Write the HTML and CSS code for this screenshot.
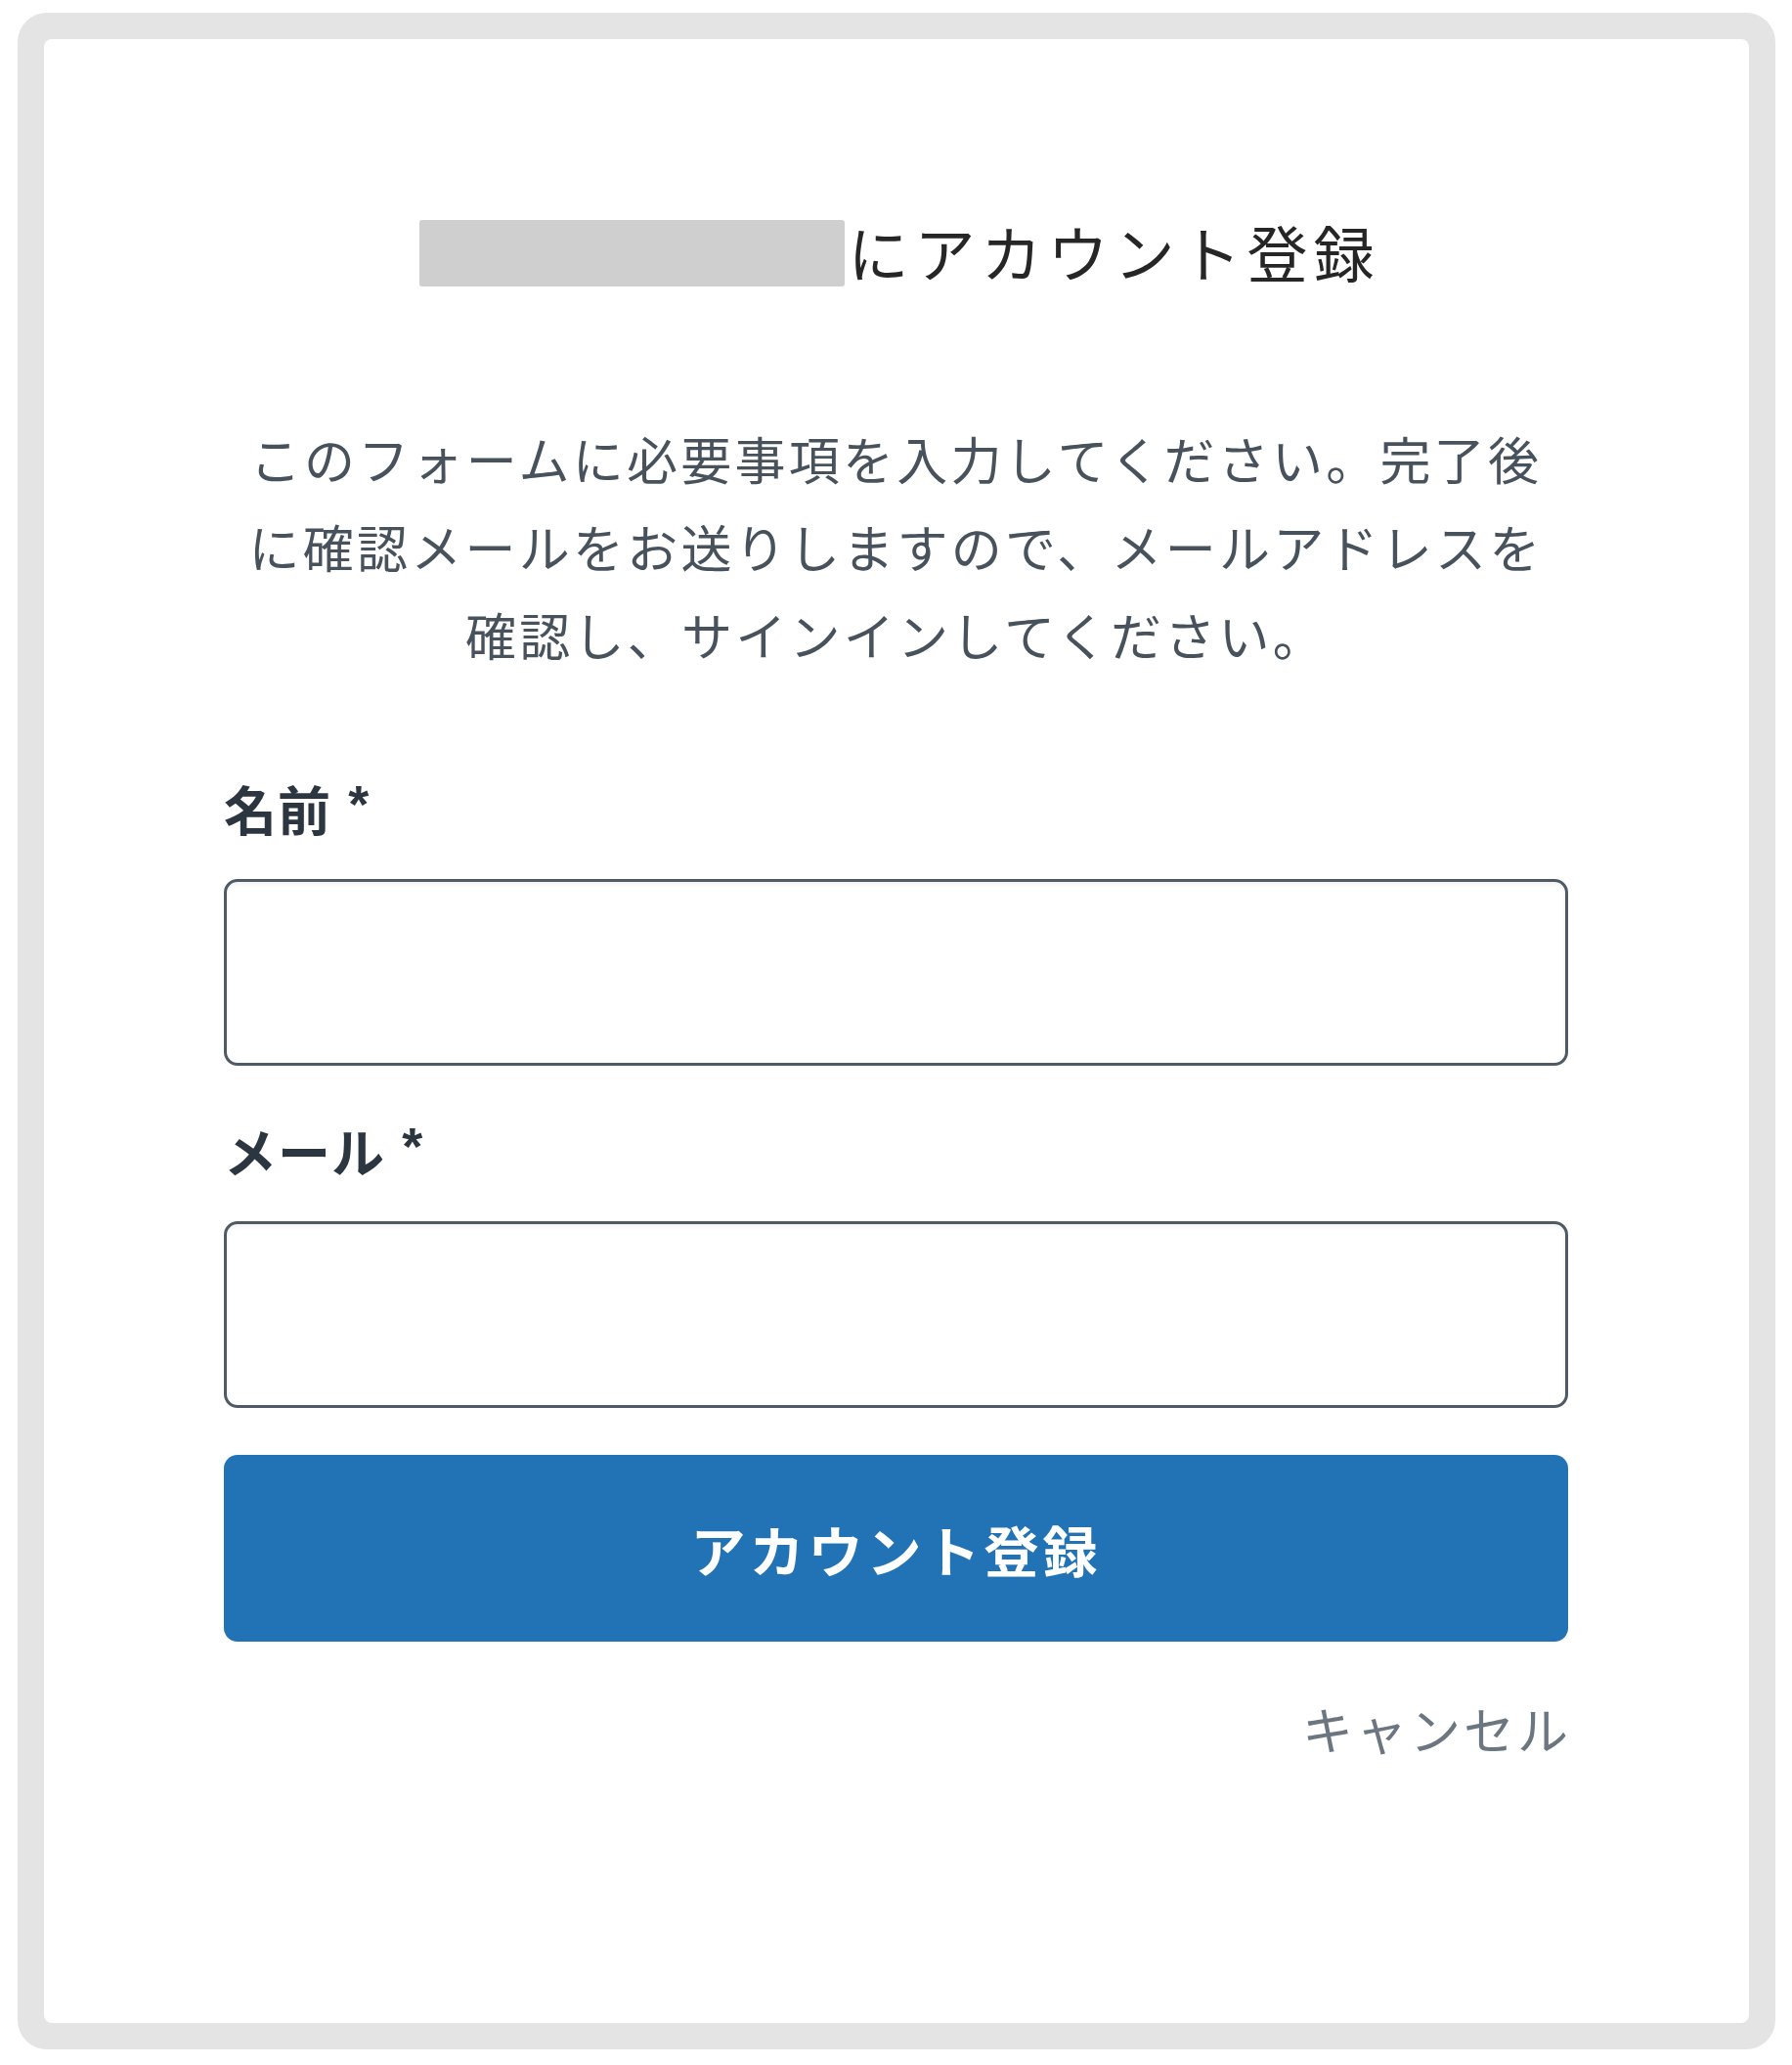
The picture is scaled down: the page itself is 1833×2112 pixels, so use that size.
FILE: index.html
```html
<!DOCTYPE html>
<html lang="ja">
<head>
<meta charset="utf-8">
<title>アカウント登録</title>
<link rel="stylesheet" href="styles.css">
</head>
<body>
  <div class="frame">
    <main class="card">
      <h1 class="title">
        <span class="redacted" aria-hidden="true"></span>
        <span class="title-text">にアカウント登録</span>
      </h1>
      <p class="lead">このフォームに必要事項を入力してください。完了後に確認メールをお送りしますので、メールアドレスを確認し、サインインしてください。</p>
      <form class="form">
        <label class="label" for="name">名前 <span class="req">*</span></label>
        <input class="input" id="name" type="text">
        <label class="label label-mail" for="mail">メール <span class="req">*</span></label>
        <input class="input" id="mail" type="email">
        <button class="submit" type="button">アカウント登録</button>
        <div class="cancel-row"><a class="cancel" href="#">キャンセル</a></div>
      </form>
    </main>
  </div>
</body>
</html>
```

FILE: styles.css
```css
html, body {
  margin: 0;
  padding: 0;
  background: #ffffff;
}

body {
  font-family: "Noto Sans CJK JP", "Noto Sans", sans-serif;
  padding: 13px 17px 16px 18px;
}

.frame {
  background: #e4e4e4;
  border-radius: 30px;
  padding: 27px;
  height: 2083px;
  box-sizing: border-box;
}

.card {
  background: #ffffff;
  border-radius: 8px;
  height: 100%;
  box-sizing: border-box;
  padding: 185px 185px 0 184px;
  display: flex;
  flex-direction: column;
}

.title {
  margin: 0;
  padding-left: 8px;
  height: 68px;
  display: flex;
  justify-content: center;
  align-items: center;
  font-weight: 400;
}

.redacted {
  display: block;
  width: 435px;
  height: 68px;
  background: #d0cfd0;
  border-radius: 3px;
  margin-right: 3px;
}

.title-text {
  font-size: 62px;
  line-height: 68px;
  letter-spacing: 6px;
  color: #262626;
  position: relative;
  top: -2px;
}

.lead {
  margin: 131px auto 0;
  width: 1345px;
  text-align: center;
  font-size: 52px;
  line-height: 90px;
  letter-spacing: 3.25px;
  color: #48525c;
}

.form {
  display: flex;
  flex-direction: column;
  margin-top: 103px;
}

.label {
  font-size: 54px;
  line-height: 60px;
  font-weight: 700;
  letter-spacing: 1px;
  color: #2c3640;
  margin-bottom: 42px;
}

.label-mail {
  margin-top: 57px;
}

.req {
  font-family: "Liberation Sans", Arial, sans-serif;
  font-weight: 700;
  font-size: 54px;
  vertical-align: top;
  position: relative;
  top: -5px;
  margin-left: 4px;
}

.input {
  display: block;
  height: 191px;
  box-sizing: border-box;
  border: 3px solid #4f5a65;
  border-radius: 14px;
  background: #ffffff;
  box-shadow: inset 0 3px 4px rgba(0, 0, 0, 0.05);
  margin: 0;
  font-size: 40px;
  padding: 0 24px;
}

.submit {
  margin-top: 48px;
  height: 191px;
  border: none;
  border-radius: 14px;
  background: #2272b6;
  color: #ffffff;
  font-family: "Noto Sans CJK JP", "Noto Sans", sans-serif;
  font-size: 56px;
  font-weight: 700;
  letter-spacing: 4px;
  cursor: pointer;
}

.cancel-row {
  margin-top: 59px;
  display: flex;
  justify-content: flex-end;
}

.cancel {
  font-size: 52px;
  line-height: 60px;
  letter-spacing: 3px;
  color: #6b7680;
  text-decoration: none;
  margin-right: -3px;
}
```
